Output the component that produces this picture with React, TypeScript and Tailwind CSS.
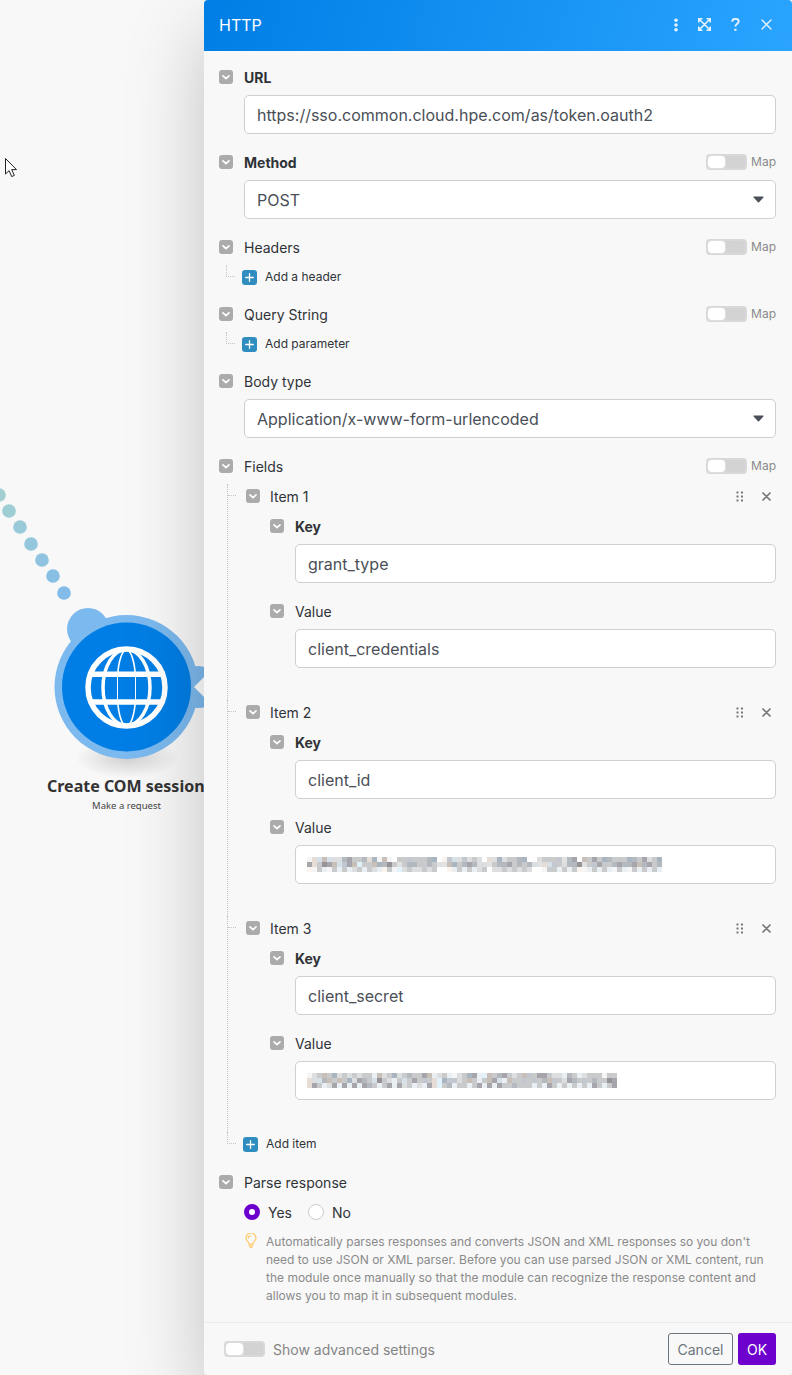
import { useState, type ReactNode } from 'react';

const palette: Record<string, string> = {
  a: '#faf3ee', b: '#d6e0e9', c: '#c9bfb9', d: '#a9b6c1', e: '#a5a5ab', f: '#c9cacc',
  g: '#dcdee0', h: '#e9eff2', i: '#b4b9bf', j: '#969398', k: '#e6ddd7', l: '#f5f5f5',
  '.': 'transparent', m: '#e2e2e2', n: '#c3c7d0', o: '#e2f2fb',
};

const idMosaic = [
  'lkbcbggieffikdlcl.ffnfffid.anbgngfg.kgdgffid..gfffnmie.cfefdifffdifegfd',
  'ekfjecbnecoffcdijfmfiiffifmmcdfieiggmfiiefifigmkbnfgiijmfneffieiieciefi',
  'alfhlfhfhgfhfghaflogfggfgf..ahfhfhgf.ggfgfgfg..lffhfhfalhfhfhlfhlfhfhfh',
];
const secretMosaic = [
  'lgfcfdgfgfgffhcgfdgfiffechgfhlgfdehocfiefgfcnfeefgghifhgffflff',
  'kgbicfcfdgeifbjfghfbfefnfkodnngfcfhfcebhcffnfnficnfgeifnfiffje',
  'kefhgeheheheifhfehegfhghekofihffhfeheheffifffhfhefhfhfhfhefhfe',
];

function Mosaic({ rows }: { rows: string[] }) {
  const cols = rows[0].length;
  return (
    <svg className="pointer-events-none col-start-1 row-start-1 ml-[12px] self-center" width={cols * 5} height={15} viewBox={`0 0 ${cols * 5} 15`} shapeRendering="crispEdges" aria-hidden="true">
      {rows.map((row, y) =>
        row.split('').map((c, x) => <rect key={`${x}-${y}`} x={x * 5} y={y * 5} width={5} height={5} fill={palette[c]} />),
      )}
    </svg>
  );
}

function Fold({ label }: { label: string }) {
  return (
    <button type="button" aria-label={`Collapse ${label}`} className="flex size-[14px] shrink-0 items-center justify-center rounded-[3px] bg-[#ababab]">
      <svg width="10" height="10" viewBox="0 0 10 10" fill="none" stroke="white" strokeWidth="1.7" strokeLinecap="round" strokeLinejoin="round">
        <path d="M2 3.8 5 6.6 8 3.8" />
      </svg>
    </button>
  );
}

function Toggle({ id }: { id: string }) {
  return (
    <input
      id={id}
      type="checkbox"
      role="switch"
      className="flex h-4 w-[41px] shrink-0 appearance-none items-center rounded-[4px] border-2 border-[#d8d8d8] bg-[#d3d3d3] before:h-3 before:w-[17px] before:rounded-[3px] before:bg-white before:outline-1 before:outline-[#dedede] checked:justify-end checked:bg-[#6d00cc]"
    />
  );
}

function MapToggle({ id }: { id: string }) {
  return (
    <span className="ml-auto flex items-center gap-1">
      <Toggle id={id} />
      <label htmlFor={id} className="text-[12px] text-[#8a8a8a]">Map</label>
    </span>
  );
}

function LabelRow({ id, label, htmlFor, bold = false, map = false }: { id?: string; label: string; htmlFor?: string; bold?: boolean; map?: boolean }) {
  const weight = bold ? 'font-bold' : 'font-normal';
  return (
    <div className="flex h-6 items-center gap-[11px]">
      <Fold label={label} />
      {htmlFor ? <label htmlFor={htmlFor} className={weight}>{label}</label> : <span id={id} className={weight}>{label}</span>}
      {map && <MapToggle id={`map-${label}`} />}
    </div>
  );
}

const box = 'col-start-1 row-start-1 h-[39px] w-full min-w-0 appearance-none rounded-[5px] border border-[#cfcfcf] bg-white px-3 text-[16px] text-[#4a4f57] outline-none';

function TextField({ id, label, value, bold, mosaic }: { id: string; label: string; value: string; bold?: boolean; mosaic?: string[] }) {
  const [text, setText] = useState(value);
  return (
    <div>
      <LabelRow label={label} htmlFor={id} bold={bold} />
      <div className="mt-[6px] ml-[25px] grid">
        <input id={id} className={box} value={text} onChange={(e) => setText(e.target.value)} />
        {mosaic && <Mosaic rows={mosaic} />}
      </div>
    </div>
  );
}

function SelectField({ id, label, options, bold, map }: { id: string; label: string; options: string[]; bold?: boolean; map?: boolean }) {
  return (
    <div>
      <LabelRow label={label} htmlFor={id} bold={bold} map={map} />
      <div className="mt-[6px] ml-[25px] grid">
        <select id={id} className={box}>
          {options.map((o) => <option key={o}>{o}</option>)}
        </select>
        <svg className="pointer-events-none col-start-1 row-start-1 mr-3 self-center justify-self-end" width="11" height="7" viewBox="0 0 11 7" fill="#4a5058" aria-hidden="true">
          <path d="M1 .5h9c.6 0 .8.5.4.9L6 6.2a.7.7 0 0 1-1 0L.6 1.4C.2 1 .4.5 1 .5Z" />
        </svg>
      </div>
    </div>
  );
}

function AddButton({ children }: { children: ReactNode }) {
  return (
    <button type="button" className="flex h-6 items-center gap-2 text-[12px]">
      <span className="flex size-[15px] items-center justify-center rounded-[3px] bg-[#2f8dc0]">
        <svg width="9" height="9" viewBox="0 0 9 9" stroke="white" strokeWidth="1.3" strokeLinecap="round" aria-hidden="true">
          <path d="M4.5.7v7.6M.7 4.5h7.6" />
        </svg>
      </span>
      {children}
    </button>
  );
}

function AddGroup({ label, action }: { label: string; action: string }) {
  return (
    <div>
      <LabelRow label={label} map />
      <div className="mt-[6px] ml-[7px] flex">
        <span className="mr-[7px] h-3 w-[9px] border-b border-l border-dotted border-[#c4c4c4]" />
        <AddButton>{action}</AddButton>
      </div>
    </div>
  );
}

function Item({ n, keyName, value, mosaic }: { n: number; keyName: string; value: string; mosaic?: string[] }) {
  return (
    <section className="flex border-l border-dotted border-[#c4c4c4] pb-8">
      <span className="mr-[10px] h-3 w-2 shrink-0 border-b border-dotted border-[#c4c4c4]" />
      <div className="min-w-0 grow">
        <div className="flex h-6 items-center gap-[10px]">
          <Fold label={`Item ${n}`} />
          <span>Item {n}</span>
          <button type="button" aria-label={`Move item ${n}`} className="mr-2 ml-auto">
            <svg width="8" height="11" viewBox="0 0 8 11" fill="#777">
              <path d="M.5.5h2v2h-2zM5 .5h2v2H5zM.5 4.500h2v2h-2zM5 4.500h2v2H5zM.5 8.500h2v2h-2zM5 8.500h2v2H5z" />
            </svg>
          </button>
          <button type="button" aria-label={`Remove item ${n}`} className="mr-[5px]">
            <svg width="9" height="9" viewBox="0 0 9 9" stroke="#757575" strokeWidth="1.7" strokeLinecap="round">
              <path d="m1 1 7 7M8 1 1 8" />
            </svg>
          </button>
        </div>
        <div className="mt-[6px] ml-6 flex flex-col gap-4">
          <TextField id={`key-${n}`} label="Key" value={keyName} bold />
          <TextField id={`value-${n}`} label="Value" value={value} mosaic={mosaic} />
        </div>
      </div>
    </section>
  );
}

function Scenario() {
  const dots = [
    [-1, 495, '#a3cfd2'], [9, 511, '#9fcdd4'], [20, 527, '#9acad8'], [31, 544, '#94c7dc'],
    [42, 560, '#8fc3e0'], [53, 576, '#89bfe4'], [64, 593, '#83bce8'],
  ] as const;
  return (
    <svg className="absolute top-0 left-0" width="280" height="830" viewBox="0 0 280 830" aria-label="Create COM session module">
      <defs>
        <radialGradient id="floor">
          <stop offset="0" stopColor="#000" stopOpacity=".16" />
          <stop offset="1" stopColor="#000" stopOpacity="0" />
        </radialGradient>
      </defs>
      {dots.map(([x, y, fill]) => <circle key={y} cx={x} cy={y} r="6.8" fill={fill} />)}
      <ellipse cx="127" cy="758" rx="52" ry="20" fill="url(#floor)" />
      <g fill="#7cb9ee">
        <circle cx="88" cy="629" r="21" />
        <circle cx="198" cy="687" r="21" />
        <circle cx="126.5" cy="687" r="72" />
      </g>
      <circle cx="126.5" cy="687" r="64.5" fill="#007ee5" />
      <path d="M194 687 216 665v44Z" fill="#fff" />
      <g fill="none" stroke="#fff">
        <circle cx="126.5" cy="687.5" r="38.5" strokeWidth="5.5" />
        <ellipse cx="126.5" cy="687.5" rx="23.5" ry="38" strokeWidth="3.5" />
        <path d="M117.5 674v28M135.500 674v28" strokeWidth="1" />
        <path d="M117.700 674c1-12 4-24 8.800-24s7.800 12 8.800 24M117.700 702c1 12 4 24 8.800 24s7.800-12 8.800-24" strokeWidth="1.600" />
        <path d="M91 674.3h71M91 702h71" strokeWidth="5.5" />
      </g>
      <text x="47" y="792" fontFamily="'Noto Sans', sans-serif" fontSize="16" fontWeight="700" fill="#333">Create COM session</text>
      <text x="126.5" y="809" textAnchor="middle" fontFamily="'Noto Sans', sans-serif" fontSize="9.5" fill="#444">Make a request</text>
      <path d="M5.500 158.500v15.500l3.600-3.400 2.600 6 2.600-1.200-2.600-5.800h4.800Z" fill="#fff" stroke="#222" strokeWidth="1" strokeLinejoin="round" />
    </svg>
  );
}

export default function App() {
  return (
    <main className="relative flex min-h-screen overflow-hidden bg-[#f8f8f8] font-['Inter',sans-serif] text-[14px] text-[#2f3337]">
      <Scenario />
      <div className="w-[204px] shrink-0" />
      <div className="relative flex min-w-0 grow rounded-[4px] shadow-[0_30px_80px_0_rgba(0,0,0,0.22)]">
        <form className="flex min-w-0 grow flex-col overflow-hidden rounded-[4px] bg-[#f8f8f8]" onSubmit={(e) => e.preventDefault()}>
          <header className="flex h-[51px] items-center bg-linear-[105deg,#007ee5,#2aa4ff] pr-5 pb-[2px] pl-[15px] text-white">
            <h1 className="grow text-[16px]">HTTP</h1>
            <div className="flex items-center">
              <button type="button" aria-label="More" className="mr-5">
                <svg width="4" height="14" viewBox="0 0 4 14" fill="#e6f3ff"><circle cx="2" cy="2.2" r="1.8" /><circle cx="2" cy="7" r="1.8" /><circle cx="2" cy="11.8" r="1.8" /></svg>
              </button>
              <button type="button" aria-label="Expand" className="mr-5">
                <svg width="13" height="13" viewBox="0 0 13 13" fill="none" stroke="#e6f3ff" strokeWidth="1.6"><path d="M.8 4.500V.8h3.700M8.500.8h3.700v3.700M12.200 8.500v3.700H8.500M4.500 12.200H.8V8.500M1 1l11 11M12 1 1 12" /></svg>
              </button>
              <button type="button" aria-label="Help" className="mr-[21px]">
                <svg width="9" height="13" viewBox="0 0 9 13" fill="none" stroke="#e6f3ff" strokeWidth="1.9"><path d="M1.200 3.600C1.300 1.800 2.700.9 4.400.9s3.300 1 3.300 2.700c0 2.200-3.300 2.300-3.300 4.900" /><path d="M4.400 10.800v2" strokeWidth="2.2" /></svg>
              </button>
              <button type="button" aria-label="Close">
                <svg width="11" height="11" viewBox="0 0 11 11" stroke="#e6f3ff" strokeWidth="1.4" strokeLinecap="round"><path d="m1 1 9 9M10 1l-9 9" /></svg>
              </button>
            </div>
          </header>

          <div className="flex grow flex-col px-4 pt-[14px] pl-[15px]">
            <div className="flex flex-col gap-4">
              <TextField id="url" label="URL" value="https://sso.common.cloud.hpe.com/as/token.oauth2" bold />
              <SelectField id="method" label="Method" options={['POST', 'GET', 'PUT', 'PATCH', 'DELETE']} bold map />
              <div className="flex flex-col gap-[13px]">
                <AddGroup label="Headers" action="Add a header" />
                <AddGroup label="Query String" action="Add parameter" />
                <SelectField id="body-type" label="Body type" options={['Application/x-www-form-urlencoded', 'Raw', 'Multipart/form-data']} />
              </div>
              <div>
                <LabelRow label="Fields" map />
                <div className="mt-[6px] ml-2">
                  <Item n={1} keyName="grant_type" value="client_credentials" />
                  <Item n={2} keyName="client_id" value="" mosaic={idMosaic} />
                  <Item n={3} keyName="client_secret" value="" mosaic={secretMosaic} />
                  <div className="flex">
                    <span className="mr-[7px] h-3 w-[9px] border-b border-l border-dotted border-[#c4c4c4]" />
                    <AddButton>Add item</AddButton>
                  </div>
                </div>
              </div>
            </div>

            <div className="mt-[14px]">
              <LabelRow id="parse-label" label="Parse response" />
              <div role="radiogroup" aria-labelledby="parse-label" className="mt-[6px] ml-[25px] flex h-6 items-center gap-4">
                {['Yes', 'No'].map((o) => (
                  <label key={o} className="flex items-center gap-2">
                    <input type="radio" name="parse" defaultChecked={o === 'Yes'} className="size-4 appearance-none rounded-full border border-[#cccccc] bg-white checked:border-[5px] checked:border-[#6d00cc]" />
                    {o}
                  </label>
                ))}
              </div>
              <div className="mt-[9px] ml-[26px] flex items-start gap-[9px]">
                <svg className="shrink-0" width="12" height="16" viewBox="0 0 12 16" fill="none" stroke="#ffc869" strokeWidth="1.2" strokeLinecap="round" aria-hidden="true">
                  <path d="M4 11.200C4 8.800 1 8 1 5a5 5 0 0 1 10 0c0 3-3 3.800-3 6.200ZM3.200 5.200A2.600 2.600 0 0 1 5.600 2.900M4.200 12.800h3.600M5 14.500h2" />
                </svg>
                <p className="text-[12px] leading-[18px] text-[#8a8a8a]">
                  Automatically parses responses and converts JSON and XML responses so you don't need to use JSON or XML parser. Before you can use parsed JSON or XML content, run the module once manually so that the module can recognize the response content and allows you to map it in subsequent modules.
                </p>
              </div>
            </div>
          </div>

          <footer className="flex h-[53px] shrink-0 items-center border-t border-[#ececec] pr-4 pl-5">
            <Toggle id="advanced" />
            <label htmlFor="advanced" className="ml-2 grow text-[14px] text-[#858585]">Show advanced settings</label>
            <button type="button" className="h-8 w-[65px] rounded-[3px] border border-[#6c757d] text-[14px] text-[#6c757d]">Cancel</button>
            <button type="submit" className="ml-[5px] h-8 w-[38px] rounded-[3px] bg-[#6d00cc] text-[14px] text-white">OK</button>
          </footer>
        </form>
      </div>
    </main>
  );
}
